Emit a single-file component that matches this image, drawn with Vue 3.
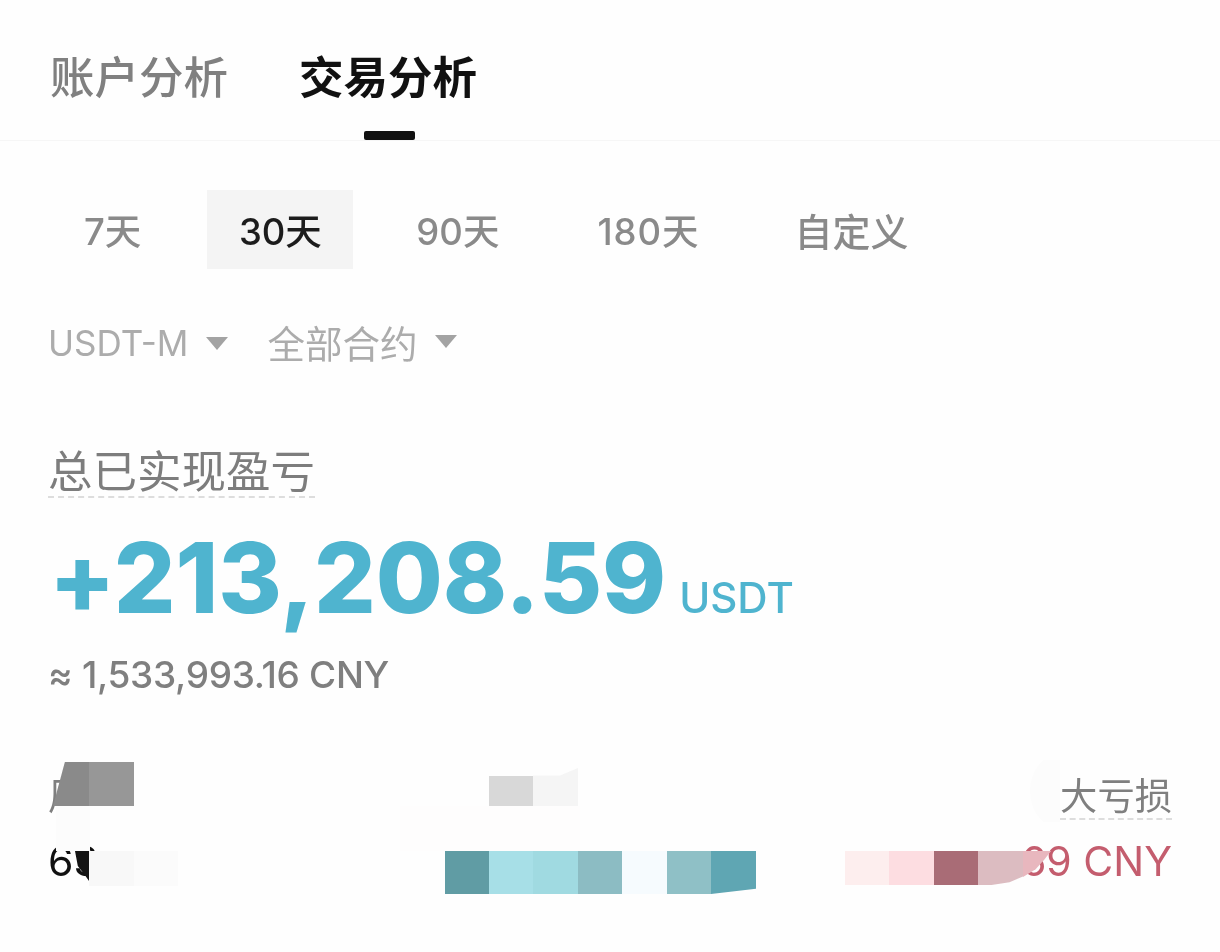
<template>
  <div class="page">
    <div class="tabs">
      <div v-for="tab in tabs" :key="tab" class="tab" :class="{ active: tab === activeTab }">{{ tab }}</div>
    </div>

    <div class="periods">
      <div v-for="p in periods" :key="p.text" class="period" :class="[p.cls, { active: p.text === activePeriod }]">{{ p.text }}</div>
    </div>

    <div class="filters">
      <div class="filter usdt">USDT-M<i class="caret"></i></div>
      <div class="filter all">全部合约<i class="caret"></i></div>
    </div>

    <div class="summary">
      <span class="label dotted">总已实现盈亏</span>
      <div class="amount">
        <span class="big">+213,208.59</span>
        <span class="unit">USDT</span>
      </div>
      <div class="approx">≈ 1,533,993.16 CNY</div>
    </div>

    <div class="stats">
      <div class="stat">
        <span class="stat-label">周</span>
        <span class="stat-value black">63</span>
      </div>
      <div class="stat right">
        <span class="stat-label dotted">大亏损</span>
        <span class="stat-value red">69 CNY</span>
      </div>
    </div>

    <div
      v-for="(m, i) in mosaics"
      :key="i"
      class="cell"
      :style="{ left: m.x + 'px', top: m.y + 'px', width: m.w + 'px', height: m.h + 'px', background: m.c, clipPath: m.clip || 'none' }"
    ></div>
  </div>
</template>

<script setup>
const tabs = ['账户分析', '交易分析']
const activeTab = '交易分析'
const activePeriod = '30天'
const periods = [
  { text: '7天', cls: 'p7' },
  { text: '30天', cls: 'p30' },
  { text: '90天', cls: 'p90' },
  { text: '180天', cls: 'p180' },
  { text: '自定义', cls: 'pc' },
]

// pixelated cover over the private numbers
const mosaics = [
  // soft white smudges
  { x: 56, y: 806, w: 34, h: 45, c: '#fcfcfc' },
  { x: 400, y: 806, w: 180, h: 45, c: '#fefdfd' },
  { x: 1030, y: 760, w: 30, h: 62, c: '#fcfcfc', clip: 'ellipse(100% 60% at 100% 50%)' },
  // left column
  { x: 53, y: 762, w: 36, h: 44, c: '#8a8a8a', clip: 'polygon(33% 0, 100% 0, 100% 100%, 0 100%)' },
  { x: 89, y: 762, w: 45, h: 44, c: '#979797' },
  { x: 75, y: 851, w: 14, h: 30, c: '#141414', clip: 'polygon(0 0, 100% 0, 100% 100%, 70% 80%, 20% 50%)' },
  { x: 89, y: 851, w: 45, h: 35, c: '#f8f8f8' },
  { x: 134, y: 851, w: 44, h: 35, c: '#fbfbfb' },
  // middle column
  { x: 489, y: 776, w: 44, h: 30, c: '#d8d8d8' },
  { x: 533, y: 768, w: 45, h: 38, c: '#f5f5f5', clip: 'polygon(0 20%, 60% 20%, 100% 0, 100% 100%, 0 100%)' },
  { x: 445, y: 851, w: 44, h: 43, c: '#609ca4' },
  { x: 489, y: 851, w: 44, h: 43, c: '#a7dfe7' },
  { x: 533, y: 851, w: 45, h: 43, c: '#a0dae1' },
  { x: 578, y: 851, w: 44, h: 43, c: '#8cbcc3' },
  { x: 622, y: 851, w: 45, h: 43, c: '#f6fbfe' },
  { x: 667, y: 851, w: 44, h: 43, c: '#8fc0c6' },
  { x: 711, y: 851, w: 45, h: 43, c: '#5fa6b3', clip: 'polygon(0 0, 100% 0, 100% 88%, 0 100%)' },
  // right column
  { x: 845, y: 851, w: 44, h: 34, c: '#fdeeee' },
  { x: 889, y: 851, w: 45, h: 34, c: '#fddde1' },
  { x: 934, y: 851, w: 44, h: 34, c: '#a96c76' },
  { x: 978, y: 851, w: 45, h: 34, c: '#dcbcc1', clip: 'polygon(0 0, 100% 0, 100% 75%, 70% 92%, 30% 100%, 0 100%)' },
  { x: 1023, y: 851, w: 28, h: 26, c: '#e8b7be', clip: 'polygon(0 0, 100% 0, 75% 35%, 45% 70%, 0 100%)' },
]
</script>

<style scoped>
.page {
  position: relative;
  width: 1220px;
  height: 952px;
  overflow: hidden;
  background: #fefefe;
  font-family: Inter, "Noto Sans CJK SC", sans-serif;
  filter: blur(0.6px);
}
.tabs {
  display: flex;
  gap: 71px;
  height: 141px;
  padding: 48px 0 0 50px;
  box-sizing: border-box;
  border-bottom: 1px solid #f6f6f6;
}
.tab {
  position: relative;
  height: 92px;
  font-size: 44.5px;
  line-height: 60px;
  font-weight: 500;
  color: #808080;
}
.tab.active {
  color: #111;
  font-weight: 700;
}
.tab.active::after {
  content: "";
  position: absolute;
  left: 65px;
  bottom: 0;
  width: 51px;
  height: 9px;
  border-radius: 2px;
  background: #111;
}
.periods {
  display: flex;
  align-items: center;
  height: 79px;
  margin-top: 49px;
  padding-left: 84px;
}
.period {
  font-size: 36.5px;
  font-weight: 500;
  color: #8a8a8a;
  white-space: nowrap;
}
.period.p30 { margin-left: 66px; }
.period.p90 { margin-left: 63px; }
.period.p180 { margin-left: 98px; letter-spacing: 1px; }
.period.pc { margin-left: 95px; font-size: 38px; }
.period.active {
  display: flex;
  align-items: center;
  justify-content: center;
  width: 146px;
  height: 79px;
  background: #f4f4f4;
  color: #1c1c1c;
}
.filters {
  display: flex;
  align-items: center;
  height: 50px;
  margin-top: 49px;
  padding-left: 48px;
  color: #acacac;
}
.filter {
  display: flex;
  align-items: center;
  white-space: nowrap;
}
.filter.usdt { font-size: 35px; }
.filter.all { font-size: 37.5px; margin-left: 39px; margin-top: -4px; }
.caret {
  width: 0;
  height: 0;
  margin-left: 18px;
  border-left: 11px solid transparent;
  border-right: 11px solid transparent;
  border-top: 13px solid #a3a3a3;
}
.summary {
  padding-left: 48px;
  margin-top: 80px;
}
.label {
  font-size: 44.5px;
  line-height: 48px;
  color: #7d7d7d;
  display: inline-block;
}
.dotted {
  border-bottom: 2px dashed #ddd;
}
.amount {
  display: flex;
  align-items: baseline;
  margin-top: 26px;
  padding-left: 1px;
  color: #4fb4cf;
  height: 108px;
}
.big {
  font-size: 97px;
  line-height: 108px;
  font-weight: 800;
  letter-spacing: -0.1px;
}
.unit {
  margin-left: 13px;
  font-size: 42px;
  font-weight: 500;
}
.approx {
  margin-top: 21px;
  font-size: 37px;
  font-weight: 500;
  letter-spacing: -0.3px;
  line-height: 44px;
  color: #7f7f7f;
}
.stats {
  display: flex;
  justify-content: space-between;
  margin-top: 79px;
  padding: 0 48px;
}
.stat {
  display: flex;
  flex-direction: column;
  align-items: flex-start;
}
.stat.right {
  align-items: flex-end;
}
.stat-label {
  font-size: 37.3px;
  line-height: 42px;
  color: #7f7f7f;
}
.stat-value {
  margin-top: 16px;
  font-size: 41px;
  line-height: 50px;
}
.stat:first-child .stat-value {
  margin-top: 18px;
}
.black { color: #111; }
.red { color: #c45d6e; }
.cell {
  position: absolute;
}
</style>
